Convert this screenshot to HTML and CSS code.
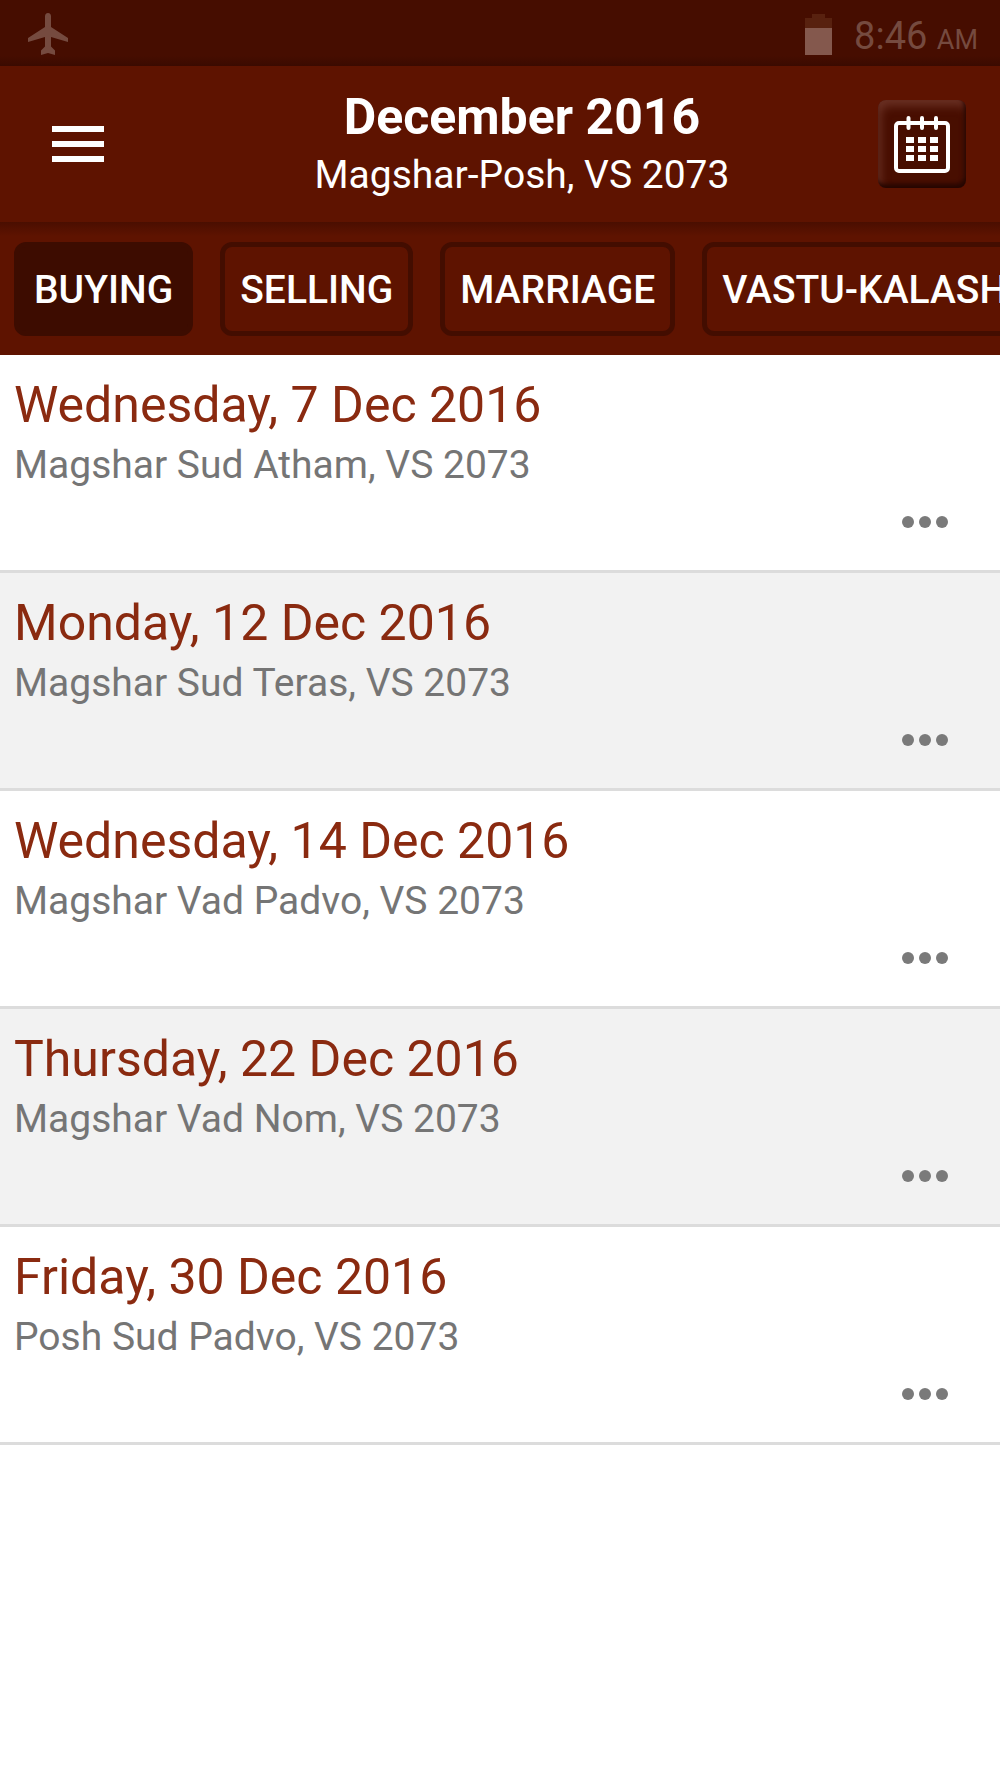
FILE: index.html
```html
<!DOCTYPE html>
<html lang="en">
<head>
<meta charset="utf-8">
<meta name="viewport" content="width=device-width, initial-scale=1">
<title>December 2016</title>
<link rel="stylesheet" href="styles.css">
</head>
<body>
<div class="status-bar">
  <svg class="plane" viewBox="0 0 40 42" aria-label="Airplane mode" role="img"><path d="M20 0c2 0 3 1.500 3 3.500V14l17 11v4L23 24v9.500l4 4V42l-7-2-7 2v-4.500l4-4V24L0 29v-4l17-11V3.500C17 1.500 18 0 20 0z"/></svg>
  <div class="status-right">
    <svg class="battery" viewBox="0 0 27 41" aria-label="Battery" role="img"><path class="battery-empty" d="M7 0h13v4h7v10H0V4h7z"/><path class="battery-fill" d="M0 14h27v27H0z"/></svg>
    <span class="clock">8:46 <span class="meridiem">AM</span></span>
  </div>
</div>
<header class="app-bar">
  <button class="menu-button" type="button" aria-label="Menu">
    <svg viewBox="0 0 52 36"><path d="M0 0h52v6H0zM0 15h52v6H0zM0 30h52v6H0z"/></svg>
  </button>
  <div class="heading">
    <h1 class="month">December 2016</h1>
    <p class="samvat">Magshar-Posh, VS 2073</p>
  </div>
  <button class="calendar-button" type="button" aria-label="Calendar">
    <svg viewBox="0 0 56 57"><rect class="frame" x="2" y="7" width="52" height="48" rx="3"/><path class="rings" d="M14.500 2v10M28 2v10M42 2v10"/><path class="days" d="M12 21h8v6h-8zM24 21h8v6h-8zM36 21h8v6h-8zM12 30h8v6h-8zM24 30h8v6h-8zM36 30h8v6h-8zM12 39h8v6h-8zM24 39h8v6h-8zM36 39h8v6h-8z"/></svg>
  </button>
</header>
<nav class="tabs">
  <button class="tab tab-active" type="button">BUYING</button>
  <button class="tab" type="button">SELLING</button>
  <button class="tab" type="button">MARRIAGE</button>
  <button class="tab" type="button">VASTU-KALASH</button>
</nav>
<main>
  <ul class="dates">
    <li class="date">
      <h2 class="day">Wednesday, 7 Dec 2016</h2>
      <p class="tithi">Magshar Sud Atham, VS 2073</p>
      <button class="more" type="button" aria-label="More"><span class="dot"></span><span class="dot"></span><span class="dot"></span></button>
    </li>
    <li class="date">
      <h2 class="day">Monday, 12 Dec 2016</h2>
      <p class="tithi">Magshar Sud Teras, VS 2073</p>
      <button class="more" type="button" aria-label="More"><span class="dot"></span><span class="dot"></span><span class="dot"></span></button>
    </li>
    <li class="date">
      <h2 class="day">Wednesday, 14 Dec 2016</h2>
      <p class="tithi">Magshar Vad Padvo, VS 2073</p>
      <button class="more" type="button" aria-label="More"><span class="dot"></span><span class="dot"></span><span class="dot"></span></button>
    </li>
    <li class="date">
      <h2 class="day">Thursday, 22 Dec 2016</h2>
      <p class="tithi">Magshar Vad Nom, VS 2073</p>
      <button class="more" type="button" aria-label="More"><span class="dot"></span><span class="dot"></span><span class="dot"></span></button>
    </li>
    <li class="date">
      <h2 class="day">Friday, 30 Dec 2016</h2>
      <p class="tithi">Posh Sud Padvo, VS 2073</p>
      <button class="more" type="button" aria-label="More"><span class="dot"></span><span class="dot"></span><span class="dot"></span></button>
    </li>
  </ul>
</main>
</body>
</html>
```
FILE: styles.css
```css
* {
  box-sizing: border-box;
  margin: 0;
  padding: 0;
}

body {
  background: #fff;
  color: #fff;
  font-family: Roboto, "Liberation Sans", sans-serif;
}

button {
  background: none;
  border: 0;
  color: inherit;
  font: inherit;
  cursor: pointer;
}

svg {
  display: block;
}

.status-bar {
  display: flex;
  align-items: center;
  justify-content: space-between;
  padding: 2px 22px 0 28px;
  background: linear-gradient(#460d00 56px, #3a0a00);
  color: #754a3f;
}

.plane {
  width: 40px;
  height: 42px;
  fill: #754a3f;
}

.status-right {
  display: flex;
  align-items: center;
  gap: 22px;
}

.battery {
  width: 27px;
  height: 41px;
}

.battery-empty {
  fill: #58210f;
}

.battery-fill {
  fill: #84584d;
}

.clock {
  padding-top: 4px;
  font-size: 38px;
  line-height: 60px;
}

.meridiem {
  font-size: 27px;
  line-height: 1;
}

.app-bar {
  display: flex;
  align-items: center;
  padding: 18px 34px 18px 52px;
  background: #5e1300;
}

.menu-button {
  padding-right: 62px;
}

.menu-button svg {
  width: 52px;
  height: 36px;
  fill: #fff;
}

.heading {
  flex: 1;
  padding-top: 4px;
  text-align: center;
}

.month {
  font-size: 50px;
  font-weight: 700;
  line-height: 58px;
}

.samvat {
  font-size: 39px;
  line-height: 58px;
}

.calendar-button {
  display: grid;
  place-items: center;
  width: 88px;
  height: 88px;
  border-radius: 8px;
  background: #480e00;
  box-shadow: inset -2px -4px 4px #260600, inset 3px 6px 10px #6a3023;
}

.calendar-button svg {
  width: 56px;
  height: 57px;
  stroke: #fff;
  fill: none;
}

.frame,
.rings {
  stroke-width: 4;
  stroke-linecap: round;
}

.calendar-button .days {
  fill: #fff;
  stroke: none;
}

.tabs {
  display: flex;
  gap: 27px;
  padding: 20px 14px 19px;
  background: linear-gradient(#4a0e00, #5e1300 14px);
  overflow-x: auto;
  scrollbar-width: none;
}

.tab {
  flex: none;
  padding: 19px 15px 17px;
  border: 5px solid #430d00;
  border-radius: 12px;
  font-size: 39px;
  font-weight: 500;
  line-height: 48px;
}

.tab-active {
  background: #3d0c00;
  border-color: #3d0c00;
}

.dates {
  list-style: none;
}

.date {
  display: flex;
  flex-direction: column;
  padding: 20px 14px 23px;
  border-bottom: 3px solid #dcdcdc;
}

.date:nth-child(even) {
  background: #f2f2f2;
}

.day {
  color: #8a2a10;
  font-size: 50px;
  font-weight: 400;
  line-height: 60px;
}

.tithi {
  color: #757575;
  font-size: 39px;
  line-height: 60px;
}

.more {
  display: flex;
  align-self: flex-end;
  gap: 5px;
  padding: 21px 38px 19px;
}

.dot {
  width: 12px;
  height: 12px;
  border-radius: 50%;
  background: #7a7a7a;
}
```
